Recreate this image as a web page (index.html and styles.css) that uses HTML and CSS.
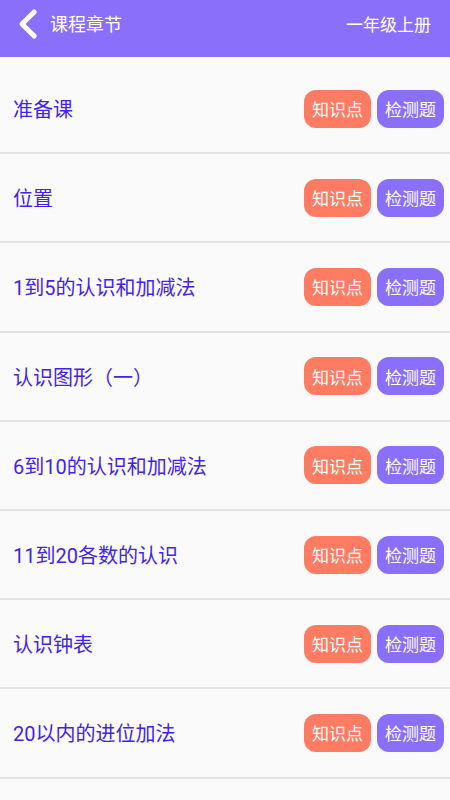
FILE: index.html
```html
<!DOCTYPE html>
<html lang="zh-CN">
<head>
<meta charset="utf-8">
<title>课程章节</title>
<link rel="stylesheet" href="styles.css">
</head>
<body>
<header class="topbar">
  <div class="left">
    <svg class="back" width="24" height="32" viewBox="0 0 24 32">
      <path d="M17.2 4 L5 16 L17.2 28" fill="none" stroke="#fff" stroke-width="5" stroke-linecap="round" stroke-linejoin="round"/>
    </svg>
    <span class="title">课程章节</span>
  </div>
  <span class="grade">一年级上册</span>
</header>
<main class="list">
  <div class="row"><span class="name">准备课</span><div class="btns"><span class="btn k">知识点</span><span class="btn t">检测题</span></div></div>
  <div class="row"><span class="name">位置</span><div class="btns"><span class="btn k">知识点</span><span class="btn t">检测题</span></div></div>
  <div class="row"><span class="name">1到5的认识和加减法</span><div class="btns"><span class="btn k">知识点</span><span class="btn t">检测题</span></div></div>
  <div class="row"><span class="name">认识图形（一）</span><div class="btns"><span class="btn k">知识点</span><span class="btn t">检测题</span></div></div>
  <div class="row"><span class="name">6到10的认识和加减法</span><div class="btns"><span class="btn k">知识点</span><span class="btn t">检测题</span></div></div>
  <div class="row"><span class="name">11到20各数的认识</span><div class="btns"><span class="btn k">知识点</span><span class="btn t">检测题</span></div></div>
  <div class="row"><span class="name">认识钟表</span><div class="btns"><span class="btn k">知识点</span><span class="btn t">检测题</span></div></div>
  <div class="row"><span class="name">20以内的进位加法</span><div class="btns"><span class="btn k">知识点</span><span class="btn t">检测题</span></div></div>
</main>
</body>
</html>
```
FILE: styles.css
```css
html, body {
  margin: 0;
  padding: 0;
  background: #fafafa;
  font-family: Roboto, "Noto Sans CJK SC", sans-serif;
  overflow: hidden;
}
.topbar {
  height: 47px;
  padding: 0 19px 10px 17px;
  background: #8a6ffb;
  display: flex;
  align-items: center;
  justify-content: space-between;
  color: #fff;
}
.left {
  display: flex;
  align-items: center;
}
.back {
  display: block;
}
.title {
  font-size: 18px;
  margin-left: 9px;
  margin-top: -1px;
}
.grade {
  font-size: 17px;
  margin-top: -1px;
}
.list {
  padding-top: 8px;
}
.row {
  height: 87.2px;
  border-bottom: 2px solid #e4e4e4;
  display: flex;
  align-items: center;
  justify-content: space-between;
  padding: 0 6px 0 13px;
}
.name {
  font-size: 20px;
  color: #4123f0;
}
.btns {
  display: flex;
  gap: 6px;
}
.btn {
  width: 67px;
  height: 38px;
  border-radius: 12px;
  display: flex;
  align-items: center;
  justify-content: center;
  color: #fff;
  font-size: 17px;
}
.btn.k {
  background: #ff7b62;
}
.btn.t {
  background: #8a6ffb;
}
```
